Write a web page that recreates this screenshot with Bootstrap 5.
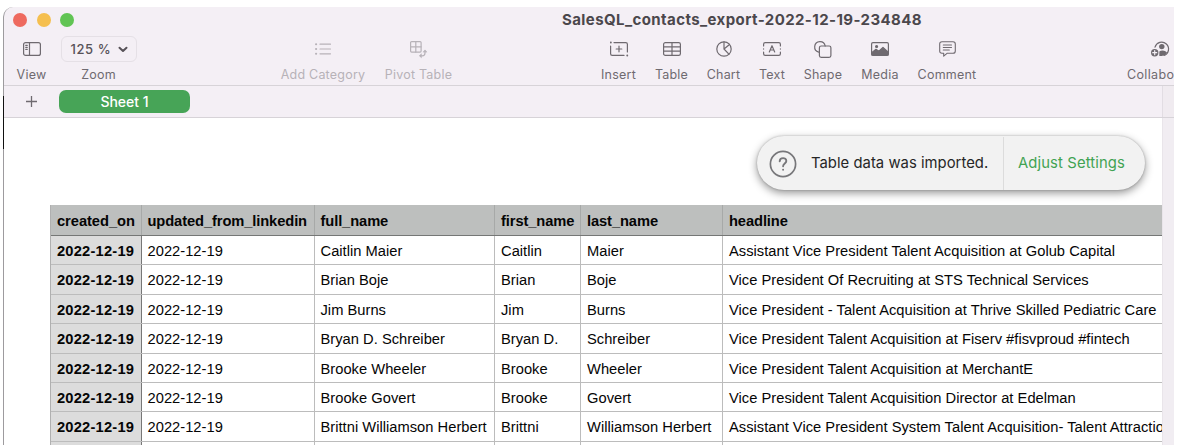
<!DOCTYPE html>
<html lang="en">
<head>
<meta charset="utf-8">
<meta name="viewport" content="width=device-width, initial-scale=1">
<title>SalesQL_contacts_export-2022-12-19-234848</title>
<link href="https://cdn.jsdelivr.net/npm/bootstrap@5.3.0/dist/css/bootstrap.min.css" rel="stylesheet">
<style>
body{background:#fff;font-family:Inter,"Liberation Sans",sans-serif;height:448px}
.win{margin:7px 0 0 3px;width:1171px;height:438px;background:#f4eff5;border-left:1px solid #9d9b9e;border-top-left-radius:10px}
.edge{top:96px;left:3px;width:1px;height:53px;background:#111}
.titlebar{height:25px;flex:none;padding-left:9px}
.dot{width:14px;height:14px;border-radius:50%}
.doc-title{font-size:15px;font-weight:700;color:#4b474c;margin-left:488px;letter-spacing:.41px;line-height:25px}
.tools{height:54px;flex:none;border-bottom:1px solid #d7d3d8;padding-top:4px}
.tool{font-size:12.5px;color:#6f6a70;line-height:16px;letter-spacing:.22px;flex:none}
.tool .pic{height:26px;margin-bottom:5px}
.tool.off{color:#b7b2b8}
.tool svg,.notice svg{fill:none;stroke:currentColor;stroke-width:1.2;stroke-linecap:round;stroke-linejoin:round;overflow:visible}
.zoombox{width:76px;height:26px;border:1px solid #e5e0e6;border-radius:6px;font-size:13px;font-weight:500;color:#575258;padding:0 9px 0 9px;letter-spacing:.6px}
.tabs{height:32px;flex:none;border-bottom:1px solid #d7d3d8}
.addtab{width:55px;color:#6f6a70}
.sheet-tab{width:131px;height:23.5px;border-radius:7px;background:#47a457;color:#fff;font-size:14px;font-weight:500;line-height:24px}
.side-top{width:12px;background:#f0ebf0;border-left:1px solid #e2dde3}
.canvas{background:#fff;width:1158px}
.side{width:12px;background:#f1edf2;border-left:1px solid #e9e5ea}
.notice{top:18px;left:753px;width:388px;height:54px;border-radius:27px;background:#f2f2f2;box-shadow:0 3px 9px rgba(0,0,0,.42),0 0 2px rgba(0,0,0,.25);font-size:14.8px;color:#262626;padding-top:1px}
.notice-msg{width:247px;border-right:1px solid #dcdcdc;padding-left:12px;gap:14px;letter-spacing:.04px}
.notice-link{color:#41a353;letter-spacing:.13px}
.grid{margin:87px 0 0 46px;width:1112px;font-family:"Liberation Sans",Arial,sans-serif;font-size:14.7px;color:#050505;border-left:1px solid #b0b0b0;letter-spacing:.02px}
.line{height:29.4px;border-bottom:1px solid #bcbcbc;white-space:nowrap}
.line>div{flex:none;border-right:1px solid #bcbcbc;padding-left:6px;line-height:30px;overflow:hidden}
.line>div:last-child{border-right:0}
.line.top{height:31px;background:#bdbfbe;border-bottom-color:#757776;font-weight:700;letter-spacing:-.1px}
.line.top>div{border-right-color:#a7a9a8;line-height:32px}
.line>.c1{width:91px;font-weight:700;background:#dcdcdc;border-right-color:#777;letter-spacing:.2px}
.line.top>.c1{background:none;letter-spacing:-.05px}
.line>.c2,.line>.c3{padding-left:5.5px}
.c2{width:173px}.c3{width:180px}.c4{width:86px}.c5{width:142px}.c6{width:439px}
</style>
</head>
<body>
<main class="win overflow-hidden d-flex flex-column">
  <header class="titlebar d-flex align-items-center">
    <div class="d-flex" style="gap:9.5px"><span class="dot" style="background:#ee6a5f"></span><span class="dot" style="background:#f5bf4f"></span><span class="dot" style="background:#61c454"></span></div>
    <div class="doc-title text-nowrap">SalesQL_contacts_export-2022-12-19-234848</div>
  </header>
  <nav class="tools d-flex">
    <div class="tool text-center" style="width:55px"><div class="pic d-flex justify-content-center align-items-center"><svg width="18" height="14"><rect x=".6" y=".6" width="16.8" height="12.8" rx="2"/><path d="M6.5 1v12M2.7 3.3h1.6M2.7 5.3h1.6M2.7 7.3h1.6"/></svg></div>View</div>
    <div class="tool text-center" style="width:79px"><div class="pic d-flex justify-content-center"><div class="zoombox d-flex align-items-center justify-content-between"><span>125 %</span><svg width="8" height="5" style="stroke-width:2"><path d="M.5.7 4 4 7.5.7"/></svg></div></div>Zoom</div>
    <div class="tool off text-center" style="width:96px;margin-left:137px"><div class="pic d-flex justify-content-center align-items-center"><svg width="16" height="12"><path d="M5 1.2h10.5M5 6h10.5M5 10.8h10.5"/><path d="M1 1.2h.2M1 6h.2M1 10.8h.2" stroke-width="2"/></svg></div>Add Category</div>
    <div class="tool off text-center" style="width:95px"><div class="pic d-flex justify-content-center align-items-center"><svg width="17" height="17"><rect x=".6" y=".6" width="10.5" height="10.5" rx="1"/><path d="M5.8.6v10.5M.6 5.8h10.5M15 10v2q0 2.8-2.8 2.8H10.5"/><path d="M13.3 10.8 15 8.9l1.7 1.9zM11.2 13.1l-1.9 1.7 1.9 1.7z" fill="currentColor" stroke-width=".6"/></svg></div>Pivot Table</div>
    <div class="tool text-center" style="width:53px;margin-left:126px"><div class="pic d-flex justify-content-center align-items-center"><svg width="18" height="14"><path d="M4 .6h11.8q1.6 0 1.6 1.6V10M.6 4v7.8q0 1.6 1.6 1.6H14M9 4.2v5.6M6.2 7h5.6"/><path d="M.8.5h.1M17.2 13.5h.1" stroke-width="1.8"/></svg></div>Insert</div>
    <div class="tool text-center" style="width:53px"><div class="pic d-flex justify-content-center align-items-center"><svg width="18" height="14"><rect x=".6" y=".6" width="16.8" height="12.8" rx="1.7"/><path d="M.6 4.8h16.8M.6 9.1h16.8M9 .6v12.8"/></svg></div>Table</div>
    <div class="tool text-center" style="width:51px"><div class="pic d-flex justify-content-center align-items-center"><svg width="16" height="16"><circle cx="8" cy="8" r="7.2"/><path d="M8 .8V8l4.9 5.2M8 8l5.5-4.5"/></svg></div>Chart</div>
    <div class="tool text-center" style="width:46px"><div class="pic d-flex justify-content-center align-items-center"><svg width="18" height="14"><path d="M.6 4V2.2Q.6.6 2.2.6h13.6q1.6 0 1.6 1.6V4M.6 10v1.8q0 1.6 1.6 1.6h13.6q1.6 0 1.6-1.6V10M.6 6.9v.2M17.4 6.9v.2M6.3 10 9 3.7l2.7 6.3M7.2 8h3.6"/></svg></div>Text</div>
    <div class="tool text-center" style="width:56px"><div class="pic d-flex justify-content-center align-items-center"><svg width="18" height="17"><path d="M4.7 11.1A5.3 5.3 0 1 1 11.2 5"/><rect x="5.4" y="5" width="11.5" height="11.3" rx="1.8"/></svg></div>Shape</div>
    <div class="tool text-center" style="width:58px"><div class="pic d-flex justify-content-center align-items-center"><svg width="18" height="14"><rect x=".6" y=".6" width="16.8" height="12.8" rx="1.3"/><path d="M1 13v-2.5L5 7.3l2.8 2L12 5.4l5 4.5V13z" fill="currentColor"/><circle cx="5.6" cy="4.5" r="1" fill="currentColor"/></svg></div>Media</div>
    <div class="tool text-center" style="width:76px"><div class="pic d-flex justify-content-center align-items-center"><svg width="17" height="16"><path d="M3 .7h11q2.3 0 2.3 2.3v7q0 2.3-2.3 2.3H8L4.7 15.2v-2.9H3Q.7 12.3.7 10V3Q.7.7 3 .7zM4.3 4h8.2M4.3 6.5h8.2M4.3 9h6" stroke-width="1.1"/></svg></div>Comment</div>
    <div class="tool text-nowrap" style="width:48px;margin-left:142px;letter-spacing:.35px"><div class="pic d-flex align-items-center" style="padding-left:24px"><svg width="19" height="16"><path d="M4 6.2A6.9 6.9 0 1 1 13 14.5"/><g fill="currentColor" stroke="none"><circle cx="10.8" cy="5.6" r="2.7"/><path d="M8.3 10.5q3-1.8 6.5 0l1.3 1.2q-2 3-5.3 3.4H8.3z"/><circle cx="3.7" cy="11.7" r="3.7"/></g><path d="M3.7 9.7v4M1.7 11.7h4" stroke="#f4eff5"/></svg></div>Collabo</div>
  </nav>
  <div class="tabs d-flex">
    <div class="addtab d-flex align-items-center justify-content-center"><svg width="11" height="11" fill="none" stroke="currentColor" stroke-width="1.3"><path d="M5.5 0v11M0 5.5h11"/></svg></div>
    <div class="sheet-tab text-center align-self-center">Sheet 1</div>
    <div class="side-top ms-auto"></div>
  </div>
  <div class="d-flex flex-grow-1 overflow-hidden position-relative">
    <section class="canvas overflow-hidden">
      <div class="grid">
        <div class="line top d-flex"><div class="c1">created_on</div><div class="c2">updated_from_linkedin</div><div class="c3">full_name</div><div class="c4">first_name</div><div class="c5">last_name</div><div class="c6">headline</div></div>
        <div class="line d-flex"><div class="c1">2022-12-19</div><div class="c2">2022-12-19</div><div class="c3">Caitlin Maier</div><div class="c4">Caitlin</div><div class="c5">Maier</div><div class="c6">Assistant Vice President Talent Acquisition at Golub Capital</div></div>
        <div class="line d-flex"><div class="c1">2022-12-19</div><div class="c2">2022-12-19</div><div class="c3">Brian Boje</div><div class="c4">Brian</div><div class="c5">Boje</div><div class="c6">Vice President Of Recruiting at STS Technical Services</div></div>
        <div class="line d-flex"><div class="c1">2022-12-19</div><div class="c2">2022-12-19</div><div class="c3">Jim Burns</div><div class="c4">Jim</div><div class="c5">Burns</div><div class="c6">Vice President - Talent Acquisition at Thrive Skilled Pediatric Care</div></div>
        <div class="line d-flex"><div class="c1">2022-12-19</div><div class="c2">2022-12-19</div><div class="c3">Bryan D. Schreiber</div><div class="c4">Bryan D.</div><div class="c5">Schreiber</div><div class="c6">Vice President Talent Acquisition at Fiserv #fisvproud #fintech</div></div>
        <div class="line d-flex"><div class="c1">2022-12-19</div><div class="c2">2022-12-19</div><div class="c3">Brooke Wheeler</div><div class="c4">Brooke</div><div class="c5">Wheeler</div><div class="c6">Vice President Talent Acquisition at MerchantE</div></div>
        <div class="line d-flex"><div class="c1">2022-12-19</div><div class="c2">2022-12-19</div><div class="c3">Brooke Govert</div><div class="c4">Brooke</div><div class="c5">Govert</div><div class="c6">Vice President Talent Acquisition Director at Edelman</div></div>
        <div class="line d-flex"><div class="c1">2022-12-19</div><div class="c2">2022-12-19</div><div class="c3">Brittni Williamson Herbert</div><div class="c4">Brittni</div><div class="c5">Williamson Herbert</div><div class="c6">Assistant Vice President System Talent Acquisition- Talent Attraction</div></div>
        <div class="line d-flex"><div class="c1"></div><div class="c2"></div><div class="c3"></div><div class="c4"></div><div class="c5"></div><div class="c6"></div></div>
      </div>
    </section>
    <aside class="side"></aside>
    <div class="notice position-absolute d-flex" role="status">
      <div class="notice-msg d-flex align-items-center"><svg width="28" height="28" style="color:#77777a;stroke-width:1.7"><circle cx="14" cy="14" r="12.6"/><path d="M10.7 11.3c.2-4.3 6.6-4.1 6.6-.3 0 2.5-3.2 2.5-3.2 5.2M14.1 19.6v.1" stroke-width="1.9"/></svg><span class="text-nowrap">Table data was imported.</span></div>
      <div class="notice-link flex-grow-1 d-flex align-items-center text-nowrap" style="padding-left:14px">Adjust Settings</div>
    </div>
  </div>
</main>
<div class="edge position-absolute"></div>
<script src="https://cdn.jsdelivr.net/npm/bootstrap@5.3.0/dist/js/bootstrap.bundle.min.js"></script>
</body>
</html>
